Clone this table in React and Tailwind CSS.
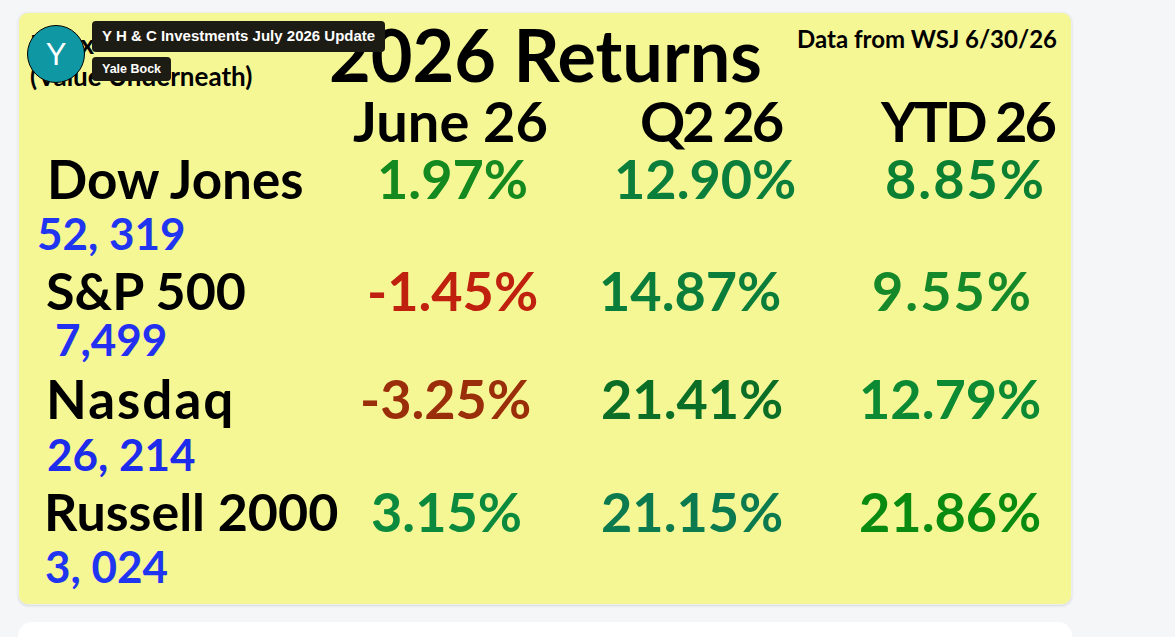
import React from "react";

const FONT = { fontFamily: "Lato, 'Noto Sans', sans-serif" };

function Cell({ w, pl, color, size, extra = "", children }) {
  return (
    <div className={`${w} ${pl} shrink-0`}>
      <span className={`${size} ${color} ${extra} font-bold leading-none whitespace-nowrap block`}>{children}</span>
    </div>
  );
}

export default function App() {
  return (
    <div className="min-h-[637px] bg-[#f5f6f8] pl-[18px] pt-[12px] overflow-hidden" style={FONT}>
      <div className="relative w-[1054px] h-[593px] rounded-[10px] bg-[#f5f794] border border-[#eceef1] shadow-sm flex flex-col">
        {/* title row */}
        <div className="flex h-[80px] pt-[5px] items-start">
          <div className="w-[310px] shrink-0 pl-[11px] pt-[10px] text-[26px] leading-[32px] font-bold text-black">
            <div>Index</div>
            <div>(Value Underneath)</div>
          </div>
          <div className="text-[72px] font-bold leading-none text-black whitespace-nowrap">2026 Returns</div>
          <div className="ml-auto pr-[14px] pt-[9px] text-[24px] font-bold leading-none text-black whitespace-nowrap">
            Data from WSJ 6/30/26
          </div>
        </div>

        {/* headers */}
        <div className="flex h-[59px]">
          <Cell w="w-[330px]" pl="pl-0" color="text-black" size="text-[56px]"></Cell>
          <Cell w="w-[240px]" pl="pl-[4px]" color="text-black" size="text-[56px]">June 26</Cell>
          <Cell w="w-[260px]" pl="pl-[51px]" color="text-black" size="text-[56px]" extra="tracking-[-3px]">Q2 26</Cell>
          <Cell w="w-[224px]" pl="pl-[32px]" color="text-black" size="text-[56px]" extra="tracking-[-3px]">YTD 26</Cell>
        </div>

        {/* Dow */}
        <div className="flex h-[59px]">
          <Cell w="w-[330px]" pl="pl-[28px]" color="text-black" size="text-[53px]">Dow Jones</Cell>
          <Cell w="w-[240px]" pl="pl-[28px]" color="text-[#13891f]" size="text-[54px]">1.97%</Cell>
          <Cell w="w-[260px]" pl="pl-[25px]" color="text-[#0b7e3c]" size="text-[54px]">12.90%</Cell>
          <Cell w="w-[224px]" pl="pl-[36px]" color="text-[#0b8033]" size="text-[54px]" extra="tracking-[2px]">8.85%</Cell>
        </div>
        <div className="flex h-[53px]">
          <Cell w="w-[330px]" pl="pl-[18px]" color="text-[#1f35f0]" size="text-[44px]">52, 319</Cell>
        </div>

        {/* S&P */}
        <div className="flex h-[53px]">
          <Cell w="w-[330px]" pl="pl-[27px]" color="text-black" size="text-[52px]">S&amp;P 500</Cell>
          <Cell w="w-[240px]" pl="pl-[18px]" color="text-[#c0200e]" size="text-[54px]">-1.45%</Cell>
          <Cell w="w-[260px]" pl="pl-[10px]" color="text-[#0a7d3b]" size="text-[54px]">14.87%</Cell>
          <Cell w="w-[224px]" pl="pl-[23px]" color="text-[#15882a]" size="text-[54px]" extra="tracking-[2px]">9.55%</Cell>
        </div>
        <div className="flex h-[55px]">
          <Cell w="w-[330px]" pl="pl-[36px]" color="text-[#2430f0]" size="text-[44px]">7,499</Cell>
        </div>

        {/* Nasdaq */}
        <div className="flex h-[60px]">
          <Cell w="w-[330px]" pl="pl-[27px]" color="text-black" size="text-[53px]" extra="tracking-[2px]">Nasdaq</Cell>
          <Cell w="w-[240px]" pl="pl-[11px]" color="text-[#9a2d0a]" size="text-[54px]">-3.25%</Cell>
          <Cell w="w-[260px]" pl="pl-[12px]" color="text-[#0b6e27]" size="text-[54px]">21.41%</Cell>
          <Cell w="w-[224px]" pl="pl-[10px]" color="text-[#0c8a33]" size="text-[54px]">12.79%</Cell>
        </div>
        <div className="flex h-[53px]">
          <Cell w="w-[330px]" pl="pl-[28px]" color="text-[#1d2bea]" size="text-[44px]">26, 214</Cell>
        </div>

        {/* Russell */}
        <div className="flex h-[59px]">
          <Cell w="w-[330px]" pl="pl-[25px]" color="text-black" size="text-[52px]">Russell 2000</Cell>
          <Cell w="w-[240px]" pl="pl-[22px]" color="text-[#0b8a3e]" size="text-[54px]">3.15%</Cell>
          <Cell w="w-[260px]" pl="pl-[12px]" color="text-[#0b7a4f]" size="text-[54px]">21.15%</Cell>
          <Cell w="w-[224px]" pl="pl-[10px]" color="text-[#098a10]" size="text-[54px]">21.86%</Cell>
        </div>
        <div className="flex h-[44px]">
          <Cell w="w-[330px]" pl="pl-[26px]" color="text-[#1f35f0]" size="text-[44px]">3, 024</Cell>
        </div>

        {/* overlay: avatar + tooltips */}
        <div className="absolute left-[8px] top-[12px] w-[58px] h-[58px] rounded-full bg-[#0f97a3] border-[1.5px] border-black flex items-center justify-center">
          <span className="text-white text-[31px] leading-none" style={{ fontFamily: "'Liberation Sans', Arial, sans-serif" }}>Y</span>
        </div>
        <div
          className="absolute left-[73px] top-[8px] h-[31px] px-[10px] flex items-center rounded-[4px] bg-[#1c1b14] text-white text-[15px] font-bold whitespace-nowrap"
          style={{ fontFamily: "'Liberation Sans', Arial, sans-serif" }}
        >
          Y H &amp; C Investments July 2026 Update
        </div>
        <div
          className="absolute left-[73px] top-[44px] h-[24px] px-[10px] flex items-center rounded-[4px] bg-[#1c1b14] text-white text-[12.5px] font-bold whitespace-nowrap"
          style={{ fontFamily: "'Liberation Sans', Arial, sans-serif" }}
        >
          Yale Bock
        </div>
      </div>
      <div className="mt-[17px] w-[1054px] h-[200px] rounded-[14px] bg-white" />
    </div>
  );
}
